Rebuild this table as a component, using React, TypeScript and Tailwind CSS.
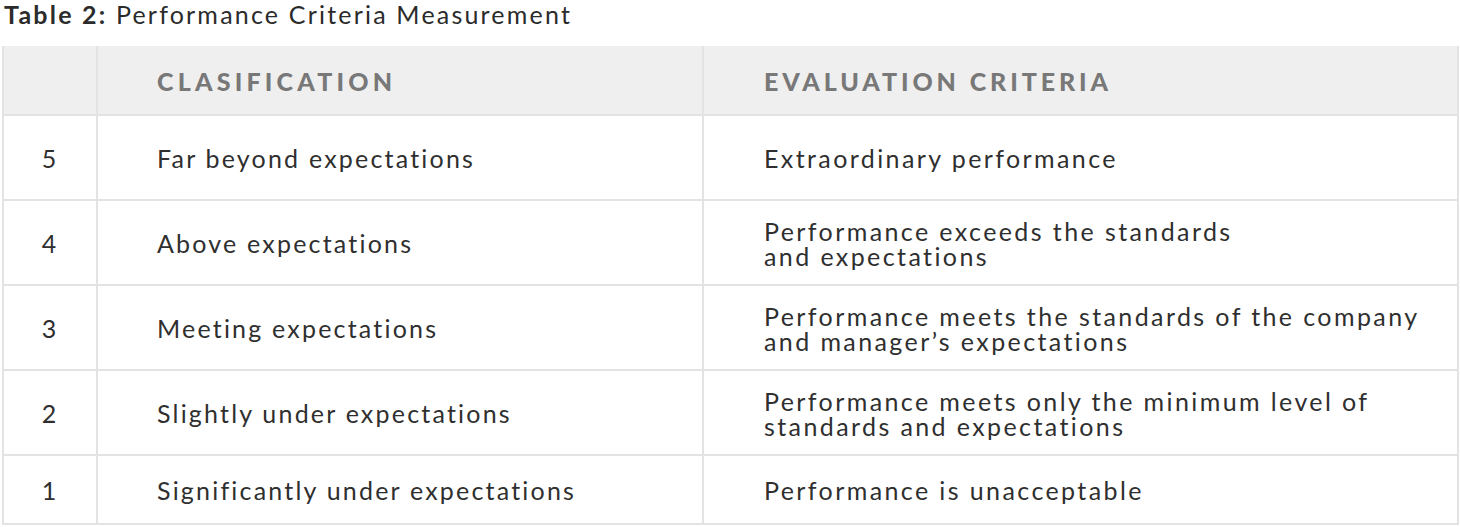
import React from 'react';

const rows = [
  { score: '5', label: 'Far beyond expectations', criteria: ['Extraordinary performance'] },
  { score: '4', label: 'Above expectations', criteria: ['Performance exceeds the standards', 'and expectations'] },
  { score: '3', label: 'Meeting expectations', criteria: ['Performance meets the standards of the company', 'and manager\u2019s expectations'] },
  { score: '2', label: 'Slightly under expectations', criteria: ['Performance meets only the minimum level of', 'standards and expectations'] },
  { score: '1', label: 'Significantly under expectations', criteria: ['Performance is unacceptable'] },
];

const App: React.FC = () => {
  return (
    <div className="w-[1460px] h-[527px] bg-white text-[#2f2f2f] font-['Lato',sans-serif] overflow-hidden">
      <div className="h-[46px] pl-[4px] pt-[1px]">
        <h1 className="text-[25px] leading-[26px] tracking-[2.2px] text-[#2b2b2b]">
          <span className="font-bold">Table 2:</span> Performance Criteria Measurement
        </h1>
      </div>

      <div className="ml-[2px] w-[1457px] border-l-2 border-r-2 border-b-2 border-[#e3e3e3]">
        <div className="grid grid-cols-[94px_606px_1fr] h-[70px] bg-[#efefef] border-b-2 border-[#e3e3e3]">
          <div className="border-r-2 border-[#e3e3e3]" />
          <div className="flex items-center pt-[3px] pl-[59px] border-r-2 border-[#e3e3e3] text-[25px] font-black tracking-[4.2px] text-[#787878] uppercase">
            Clasification
          </div>
          <div className="flex items-center pt-[3px] pl-[60px] text-[25px] font-black tracking-[3.9px] text-[#787878] uppercase">
            Evaluation Criteria
          </div>
        </div>

        {rows.map((row, i) => (
          <div
            key={row.score}
            className={
              i === rows.length - 1
                ? 'grid grid-cols-[94px_606px_1fr] h-[67px]'
                : 'grid grid-cols-[94px_606px_1fr] h-[85px] border-b-2 border-[#e3e3e3]'
            }
          >
            <div className="flex items-center justify-center pt-[2px] border-r-2 border-[#e3e3e3] text-[25px] pr-[2px]">
              {row.score}
            </div>
            <div className="flex items-center pt-[2px] pl-[59px] border-r-2 border-[#e3e3e3] text-[25px] tracking-[2.2px]">
              {row.label}
            </div>
            <div className="flex items-center pt-[2px] pl-[60px] text-[25px] leading-[25px] tracking-[2.4px]">
              <p>
                {row.criteria.map((line, j) => (
                  <React.Fragment key={j}>
                    {j > 0 && <br />}
                    {line}
                  </React.Fragment>
                ))}
              </p>
            </div>
          </div>
        ))}
      </div>
    </div>
  );
};

export default App;
